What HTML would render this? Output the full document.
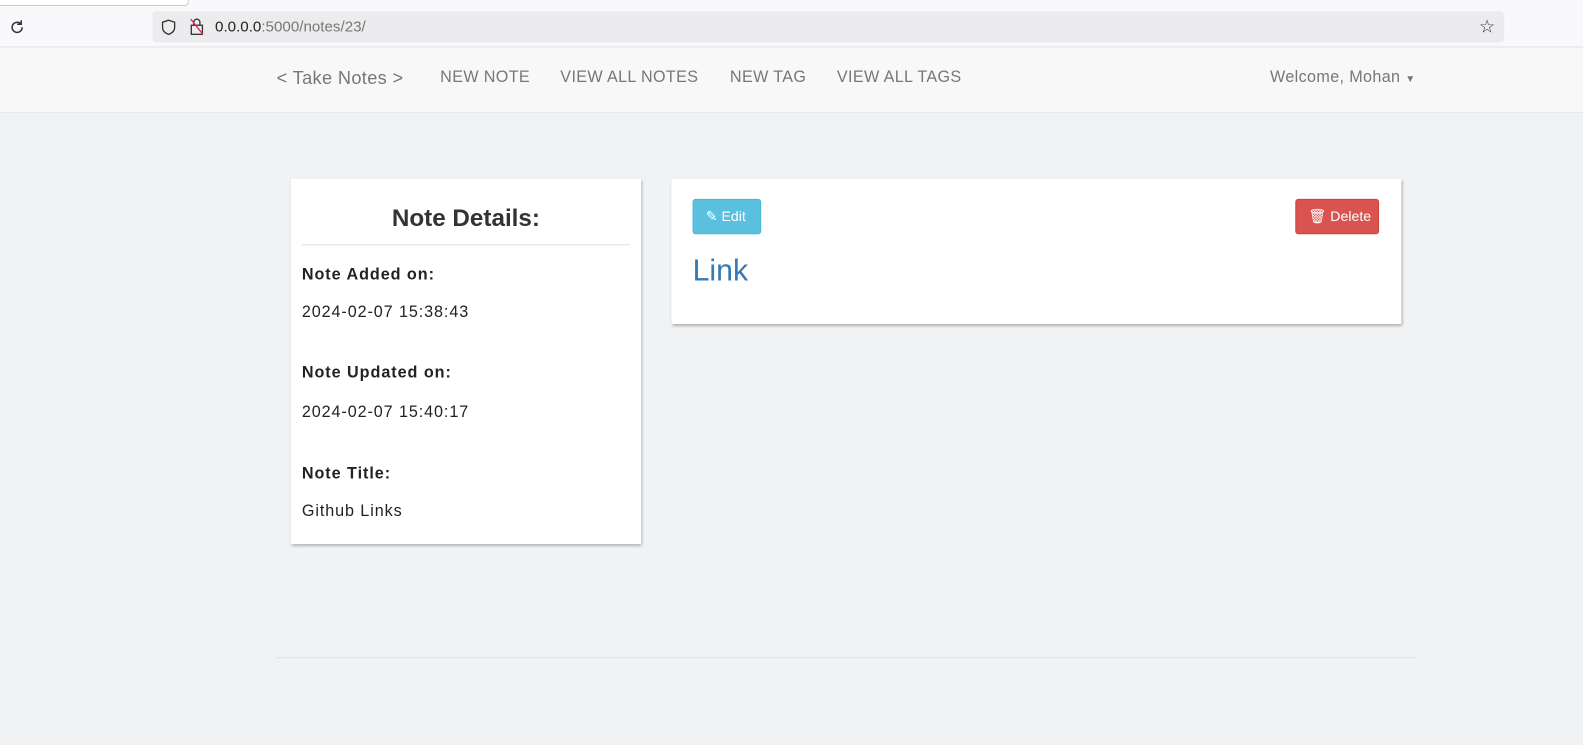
<!DOCTYPE html>
<html><head><meta charset="utf-8"><style>
*{box-sizing:border-box}
body{margin:0;width:1583px;height:745px;overflow:hidden;background:#f1f2f4;font-family:"Liberation Sans",sans-serif;position:relative}
#w{position:absolute;left:0;top:0;width:1568px;height:738px;transform:scale(1.00957);transform-origin:0 0}
.abs{position:absolute}
.chrome{left:0;top:0;width:1568px;height:47px;background:#f9f9fb;border-bottom:1px solid #e0e0e2}
.tab{left:0;top:0;width:187px;height:6px;background:#fff;border-bottom:1px solid #ccc;border-right:1px solid #ccc;border-radius:0 0 4px 0}
.url{left:151px;top:11px;width:1339px;height:31px;background:#ececee;border-radius:4px}
.nav{left:0;top:47px;width:1568px;height:65px;background:#f8f8f8;border-bottom:1px solid #e7e7e7}
.nav span{position:absolute;top:21px;font-size:16px;color:#777;letter-spacing:0.35px}
.card{background:#fff;box-shadow:1px 2px 3px rgba(0,0,0,.35)}
.lbl{position:absolute;left:11px;font-size:16px;font-weight:bold;color:#222;letter-spacing:0.95px;top:1px}
.val{position:absolute;left:11px;font-size:16px;color:#222;letter-spacing:0.9px}
.btn{position:absolute;top:20px;height:35px;border-radius:3px;color:#fff;font-size:14px;line-height:33px;padding-left:12px}
</style></head><body><div id="w">
<div class="abs chrome"></div>
<div class="abs tab"></div>
<svg class="abs" style="left:9px;top:19px" width="16" height="16" viewBox="0 0 16 16"><path d="M13 8a5 5 0 1 1-1.5-3.5" fill="none" stroke="#333" stroke-width="1.5"/><path d="M12 1v4h-4" fill="none" stroke="#333" stroke-width="1.5"/></svg>
<div class="abs url"></div>
<svg class="abs" style="left:160px;top:19px" width="14" height="16" viewBox="0 0 14 16"><path d="M7 1l6 2v5c0 4-3 6-6 7c-3-1-6-3-6-7V3z" fill="none" stroke="#333" stroke-width="1.3"/></svg>
<svg class="abs" style="left:188px;top:18px" width="14" height="17" viewBox="0 0 14 17"><rect x="1.5" y="7" width="11" height="9" fill="none" stroke="#333" stroke-width="1.3"/><path d="M4 7V4a3 3 0 0 1 6 0v3" fill="none" stroke="#333" stroke-width="1.3"/><path d="M1 1l12 15" stroke="#e22850" stroke-width="1.3"/></svg>
<div class="abs" style="left:213px;top:18px;font-size:15px;color:#222">0.0.0.0<span style="color:#777">:5000/notes/23/</span></div>
<div class="abs" style="left:1465px;top:16px;font-size:18px;color:#333">☆</div>
<div class="abs nav">
<span style="left:274px;font-size:18px;top:20px">&lt; Take Notes &gt;</span>
<span style="left:436px">NEW NOTE</span>
<span style="left:555px">VIEW ALL NOTES</span>
<span style="left:723px">NEW TAG</span>
<span style="left:829px">VIEW ALL TAGS</span>
<span style="left:1258px">Welcome, Mohan <span style="position:static;font-size:10px">▼</span></span>
</div>
<div class="abs card" style="left:288px;top:177px;width:347px;height:362px">
<div style="position:absolute;top:26px;width:100%;text-align:center;font-size:24px;font-weight:bold;color:#333">Note Details:</div>
<div style="position:absolute;left:11px;right:11px;top:65px;border-top:1px solid #ddd"></div>
<div class="lbl" style="top:87px">Note Added on:</div>
<div class="val" style="top:124px">2024-02-07 15:38:43</div>
<div class="lbl" style="top:184px">Note Updated on:</div>
<div class="val" style="top:223px">2024-02-07 15:40:17</div>
<div class="lbl" style="top:284px">Note Title:</div>
<div class="val" style="top:321px">Github Links</div>
</div>
<div class="abs card" style="left:665px;top:177px;width:723px;height:144px">
<div class="btn" style="left:21px;width:68px;background:#5bc0de;border:1px solid #46b8da">✎ Edit</div>
<div class="btn" style="left:618px;width:83px;background:#d9534f;border:1px solid #d43f3a">🗑 Delete</div>
<div style="position:absolute;left:21px;top:75px;font-size:30px;color:#337ab7">Link</div>
</div>
<div class="abs" style="left:274px;top:651px;width:1129px;border-top:1px solid #ddd"></div>
</div></body></html>
